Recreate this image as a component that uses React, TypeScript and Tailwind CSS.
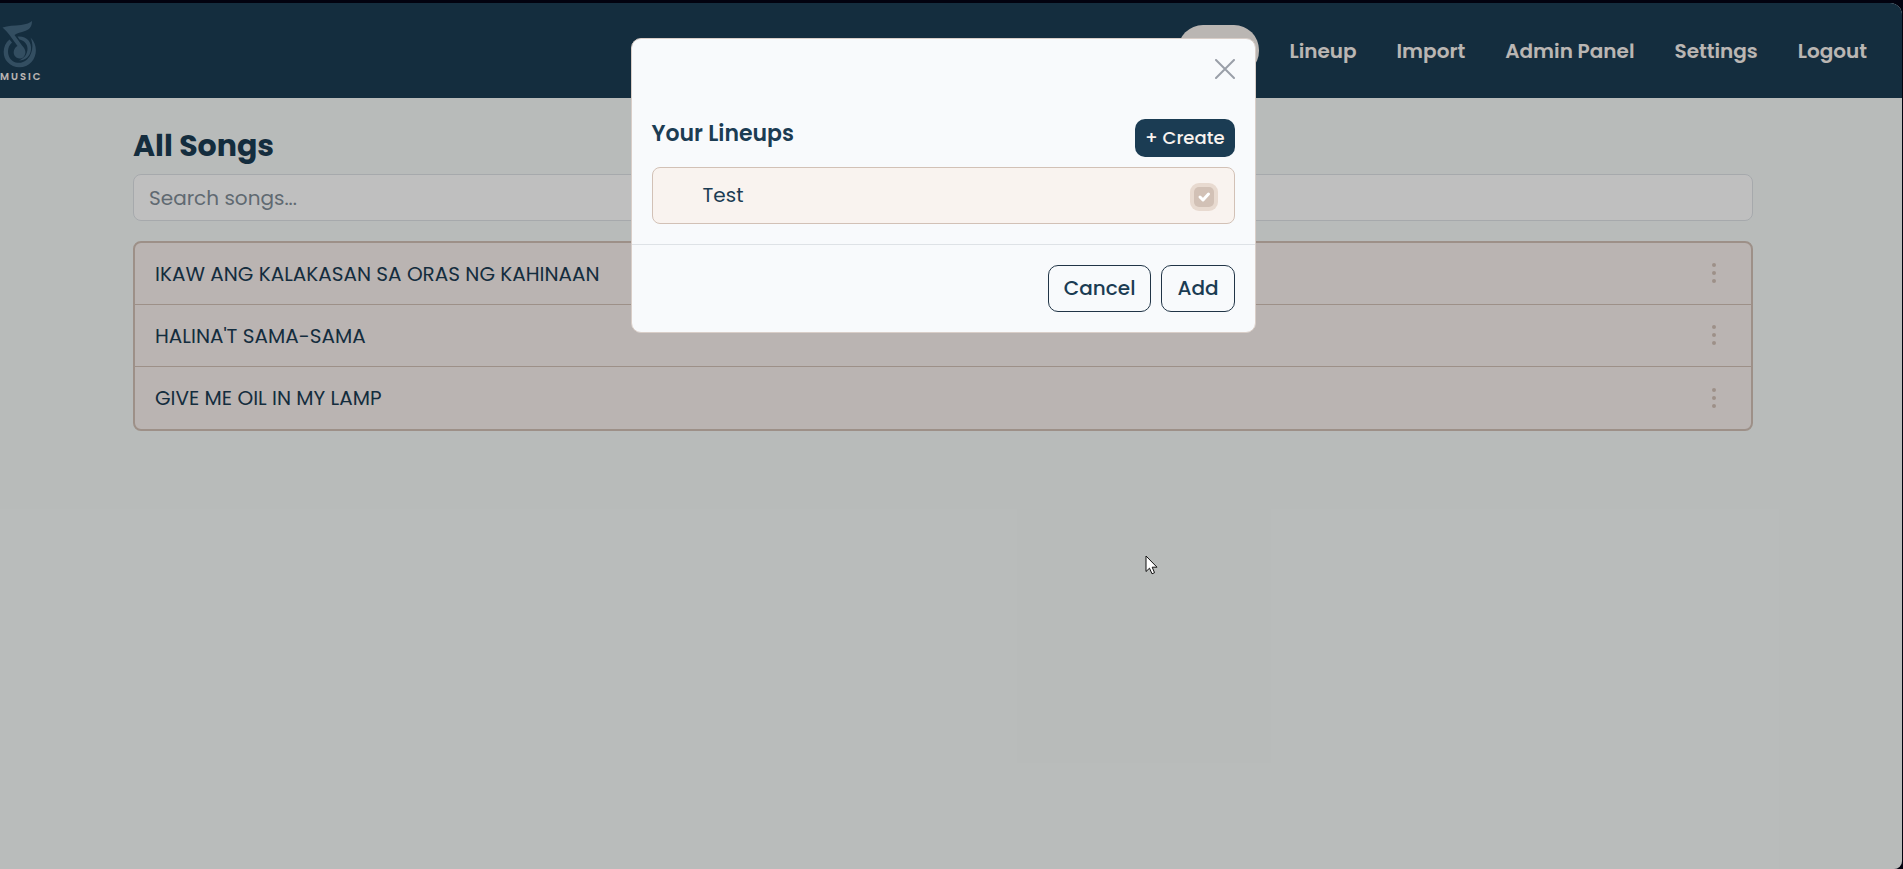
const navLinks = ["Lineup", "Import", "Admin Panel", "Settings", "Logout"];
const songs = [
  "IKAW ANG KALAKASAN SA ORAS NG KAHINAAN",
  "HALINA'T SAMA-SAMA",
  "GIVE ME OIL IN MY LAMP",
];

function Logo() {
  return (
    <a href="#" aria-label="Music home" className="flex flex-col text-[#f9f3ef]">
      <svg width="40" height="48" viewBox="0 0 40 48" className="text-[#456882]" fill="none" aria-hidden="true">
        <path
          d="M2.500 7.500C8 5.500 14 5.800 21 5C26.500 4.300 30 3 32 1C32 6 30 9.500 25 11C21 12.500 17 13 14.500 15L22 25.500C26 29.500 26.500 33.500 23.500 37C21 39.500 16.500 39 14.500 35.500C12.800 32 14 28 17.500 26L9.500 15C7.500 12 5 9.800 2.500 7.500Z"
          fill="currentColor"
        />
        <path d="M9.500 19.500C2.500 25 1.800 36 7.500 42C13.500 49 25.500 49 31.500 42C37.500 35.500 37.500 24 30.500 17.500C34 25.500 32.500 34.500 27 39.500C21 45 12 43.500 9 36.500C7 31.500 8 26 12 22.500Z" fill="currentColor" />
        <path d="M17.500 16.500C26 15.500 32 21.500 31 29.500C30.500 36 25.500 40.500 19 40.500C24.500 38 27.500 34 27.500 28.500C27.500 24 24 20.500 19.500 19.500Z" fill="currentColor" />
      </svg>
      <span className="mt-1 text-[10px] leading-[10px] font-semibold tracking-[2px]">MUSIC</span>
    </a>
  );
}

function Kebab() {
  return (
    <svg width="6" height="22" viewBox="0 0 6 22" fill="currentColor" aria-hidden="true">
      <circle cx="3" cy="3" r="2" />
      <circle cx="3" cy="11" r="2" />
      <circle cx="3" cy="19" r="2" />
    </svg>
  );
}

function LineupDialog() {
  return (
    <div
      role="dialog"
      aria-modal="true"
      aria-labelledby="lineups-title"
      className="w-full max-w-[625px] rounded-[10px] border border-[#d9cec8] bg-[#f8fafc]"
    >
      <div className="flex justify-end px-5 pt-5">
        <button type="button" aria-label="Close" className="text-[#9a9fa8]">
          <svg width="20" height="20" viewBox="0 0 20 20" fill="none" stroke="currentColor" strokeWidth="2" strokeLinecap="round">
            <path d="M1 1L19 19M19 1L1 19" />
          </svg>
        </button>
      </div>
      <div className="px-5 pt-10 pb-5">
        <div className="flex items-start justify-between">
          <h2 id="lineups-title" className="text-[22px] leading-[30px] font-semibold">Your Lineups</h2>
          <button type="button" className="h-[38px] rounded-[10px] bg-[#1b3c53] px-[10px] text-lg font-medium text-[#f9f3ef]">
            + Create
          </button>
        </div>
        <div className="mt-[10px] flex h-[57px] items-center justify-between rounded-lg border border-[#d2c1b6] bg-[#f9f3ef] pt-[2px] pr-4 pl-[50px]">
          <label htmlFor="lineup-test" className="pb-1 text-xl">Test</label>
          <span className="relative grid size-7 place-items-center">
            <input
              id="lineup-test"
              type="checkbox"
              defaultChecked
              className="size-5 appearance-none rounded-[5px] bg-[#d2c1b6] ring-4 ring-[#e8dad0]"
            />
            <svg
              className="pointer-events-none absolute size-5 text-white"
              viewBox="0 0 20 20"
              fill="none"
              stroke="currentColor"
              strokeWidth="3"
              strokeLinecap="round"
              strokeLinejoin="round"
              aria-hidden="true"
            >
              <path d="M6 10L9 13L14.500 7" />
            </svg>
          </span>
        </div>
      </div>
      <div className="flex justify-end gap-[10px] border-t border-[#dee2e6] p-5">
        <button type="button" className="h-[47px] rounded-[10px] border border-[#213547] px-[15px] pb-[2px] text-xl font-medium">
          Cancel
        </button>
        <button type="button" className="h-[47px] rounded-[10px] border border-[#213547] px-[15px] pb-[2px] text-xl font-medium">
          Add
        </button>
      </div>
    </div>
  );
}

export default function App() {
  return (
    <div className="flex min-h-screen bg-[#02020f] pt-[3px] pr-px font-[Poppins,Inter,sans-serif] text-[#1b3c53]">
      <div className="relative flex-1 overflow-hidden rounded-tr-[12px] rounded-br-lg bg-[#f6faf9]">
        <header className="flex h-[95px] items-center justify-between bg-[#1b3c53] pr-[15px]">
          <Logo />
          <nav className="flex items-center text-xl font-semibold text-[#f9f3ef]">
            <a href="#" aria-label="Songs" aria-current="page" className="h-[51px] w-[81px] rounded-[25px] bg-[#f9f3ef]" />
            <span className="w-[10px]" />
            {navLinks.map((label) => (
              <a key={label} href="#" className="px-5">{label}</a>
            ))}
          </nav>
        </header>
        <main className="pr-4">
          <div className="mx-auto max-w-[1620px] pt-[27px]">
            <h1 className="text-[30px] leading-[42px] font-bold">All Songs</h1>
            <input
              type="search"
              aria-label="Search songs"
              placeholder="Search songs..."
              className="mt-[7px] block h-[47px] w-full rounded-lg border border-[#dee2e6] bg-white px-[15px] text-xl placeholder:text-[#808d97]"
            />
            <ul className="mt-5 divide-y divide-[#d2c1b6] rounded-lg border-2 border-[#d2c1b6] bg-[#f9f0ee]">
              {songs.map((song) => (
                <li key={song} className="flex h-[62px] items-center justify-between pr-[34px] pl-5 text-xl">
                  <span>{song}</span>
                  <button type="button" aria-label={"Options for " + song} className="pb-px text-[#d2c1b6]">
                    <Kebab />
                  </button>
                </li>
              ))}
            </ul>
          </div>
        </main>
        <div className="absolute inset-0 flex items-start justify-center bg-black/25 pt-[35px] pr-4">
          <LineupDialog />
        </div>
        <svg className="absolute top-[552px] left-[1145px]" width="13" height="20" viewBox="0 0 13 20" aria-hidden="true">
          <path d="M1 1V16.500L4.500 13.200L7 18.800L9.500 17.700L7.200 12.200H12Z" fill="#fff" stroke="#111" strokeWidth="1" strokeLinejoin="round" />
        </svg>
      </div>
    </div>
  );
}
